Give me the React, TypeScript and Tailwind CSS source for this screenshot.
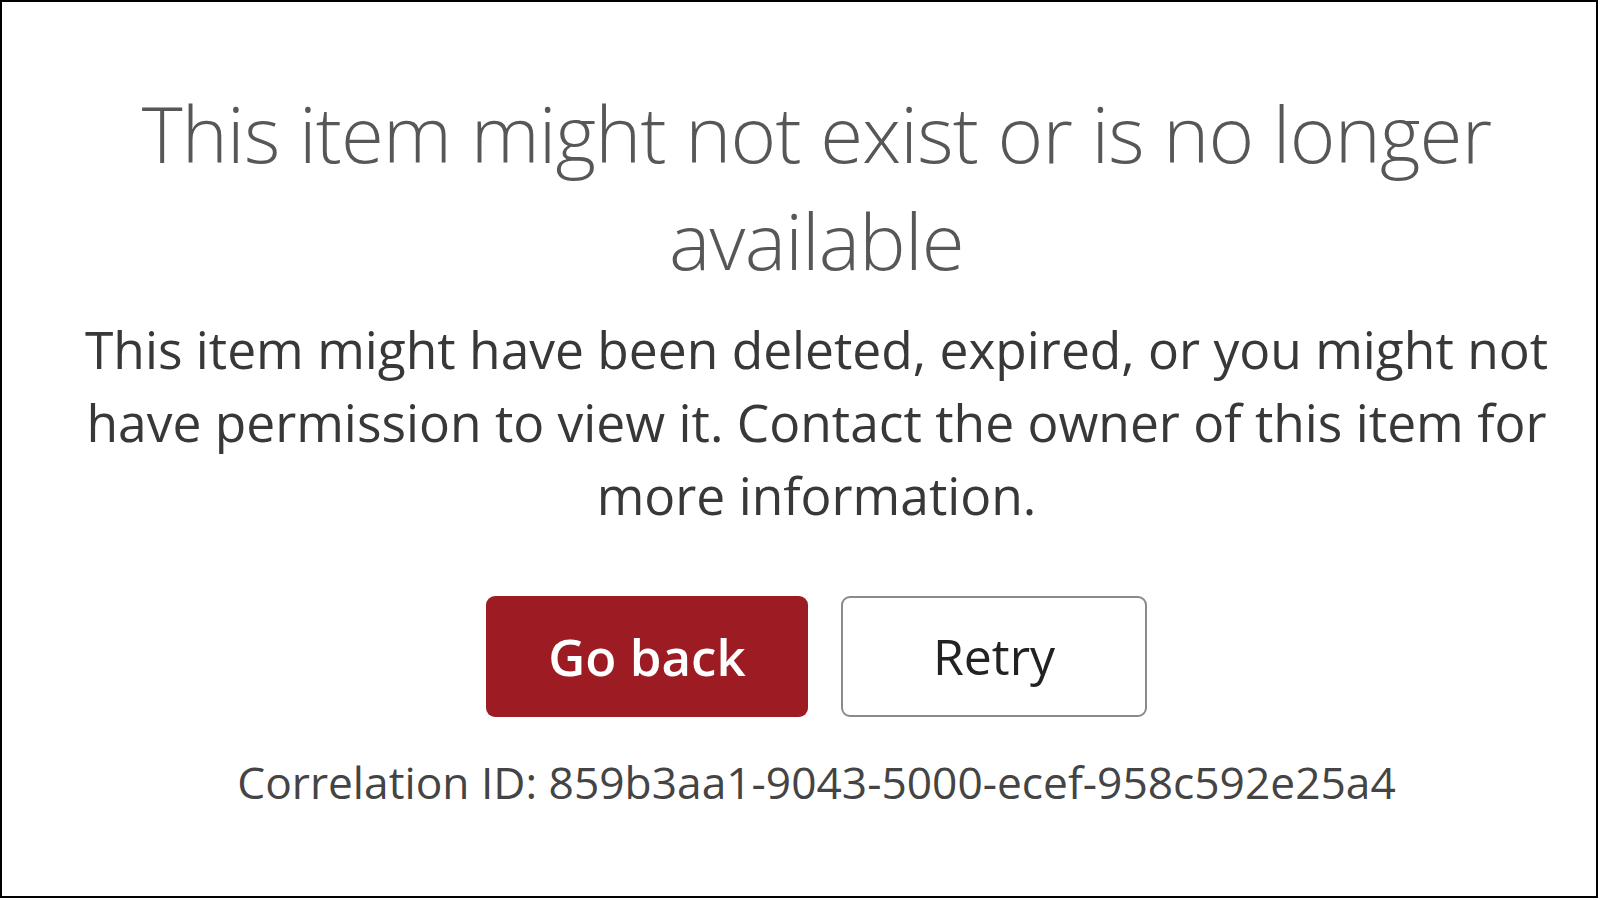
import React from "react";

export default function App() {
  return (
    <div className="w-[1598px] h-[898px] border-2 border-black bg-white pl-[35px] flex flex-col items-center text-center font-['Open_Sans','Noto_Sans',sans-serif]">
      <h1 className="mt-[78px] text-[78px] leading-[107px] font-light text-[#575757] tracking-[-0.8px]">
        <span className="block">This item might not exist or is no longer</span>
        <span className="block">available</span>
      </h1>
      <p className="mt-[19px] text-[51.5px] leading-[73px] text-[#383838]">
        <span className="block">This item might have been deleted, expired, or you might not</span>
        <span className="block">have permission to view it. Contact the owner of this item for</span>
        <span className="block">more information.</span>
      </p>
      <div className="mt-[64px] flex gap-[33px]">
        <button className="w-[322px] h-[121px] rounded-[9px] bg-[#9d1c24] text-white text-[51px] font-semibold">
          Go back
        </button>
        <button className="w-[306px] h-[121px] rounded-[9px] border-2 border-[#8a8a8a] bg-white text-[#222222] text-[50px]">
          Retry
        </button>
      </div>
      <p className="mt-[35px] text-[44.3px] leading-[60px] text-[#444444]">
        Correlation ID: 859b3aa1-9043-5000-ecef-958c592e25a4
      </p>
    </div>
  );
}
